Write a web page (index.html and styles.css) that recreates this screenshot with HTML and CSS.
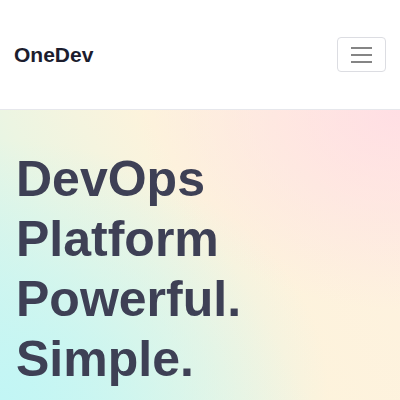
FILE: index.html
```html
<!DOCTYPE html>
<html lang="en">
<head>
<meta charset="utf-8">
<title>OneDev</title>
<link rel="stylesheet" href="styles.css">
</head>
<body>
<header class="navbar">
  <a class="brand" href="#">OneDev</a>
  <button class="toggler" type="button" aria-label="Toggle navigation">
    <span class="bar"></span>
    <span class="bar"></span>
    <span class="bar"></span>
  </button>
</header>
<section class="hero">
  <h1 class="hero-title">DevOps<br>Platform<br>Powerful.<br>Simple.</h1>
</section>
</body>
</html>
```
FILE: styles.css
```css
* { box-sizing: border-box; }
html, body { margin: 0; padding: 0; }
body {
  font-family: "Liberation Sans", Arial, sans-serif;
  background: #fff;
  overflow: hidden;
}
.navbar {
  height: 110px;
  display: flex;
  align-items: center;
  justify-content: space-between;
  padding: 0 14px 0 14px;
  border-bottom: 1px solid #e6e7ec;
  background: #fff;
}
.brand {
  font-size: 21px;
  font-weight: 700;
  color: #1c1d2e;
  text-decoration: none;
}
.toggler {
  width: 49px;
  height: 35px;
  border: 1px solid #dcdde2;
  border-radius: 4px;
  background: #fff;
  display: flex;
  flex-direction: column;
  align-items: center;
  justify-content: center;
  gap: 5px;
  padding: 0;
}
.bar {
  display: block;
  width: 21px;
  height: 2px;
  background: #858585;
}
.hero {
  height: 290px;
  padding: 39px 16px 0;
  background:
    radial-gradient(ellipse 260px 200px at 100% 0%, rgba(255, 221, 228, 0.95), rgba(255, 221, 228, 0) 100%),
    radial-gradient(ellipse 330px 260px at 0% 100%, rgba(194, 246, 245, 1), rgba(194, 246, 245, 0) 100%),
    linear-gradient(60deg, #d2f5ee 0%, #ecf5e2 30%, #fdf3dc 55%, #fef1e0 100%);
}
.hero-title {
  margin: 0;
  font-size: 50px;
  line-height: 60px;
  font-weight: 700;
  color: #3e4055;
}
```
